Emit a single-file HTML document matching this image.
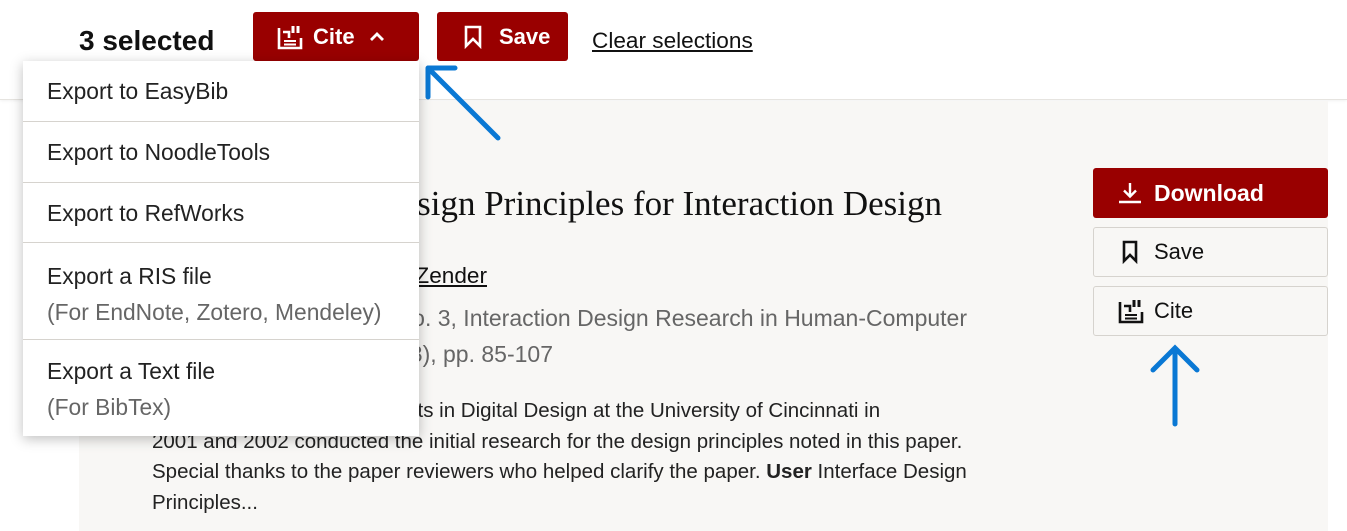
<!DOCTYPE html>
<html><head><meta charset="utf-8"><style>
*{margin:0;padding:0;box-sizing:border-box}
body{width:1347px;height:531px;overflow:hidden;background:#fff;font-family:"Liberation Sans",sans-serif;position:relative}
.hdr{position:absolute;left:0;top:0;width:1347px;height:100px;background:#fff;border-bottom:1px solid #e6e4e0;box-shadow:0 1px 3px rgba(0,0,0,.06)}
.panel{position:absolute;left:79px;top:101px;width:1249px;height:430px;background:#f8f7f5}
.abs{position:absolute;white-space:nowrap}
.btn{position:absolute;background:#990000;color:#fff;font-weight:bold;border-radius:3px;display:flex;align-items:center}
.obtn{position:absolute;left:1093px;width:235px;height:50px;border:1px solid #d6d3ce;border-radius:3px;background:#f8f7f5;display:flex;align-items:center;font-size:22px;color:#111}
.menu{position:absolute;left:23px;top:61px;width:396px;height:375px;background:#fff;box-shadow:0 3px 12px rgba(0,0,0,.25)}
.it{border-bottom:1px solid #d6d3ce;padding-left:24px;font-size:22.8px;color:#222}
.sub{color:#666}
</style></head><body>
<div class="hdr"></div>
<div class="panel"></div>
<div class="abs" style="left:79px;top:25px;font-size:28px;font-weight:bold;color:#111">3 selected</div>
<div class="btn" style="left:253px;top:12px;width:166px;height:49px;font-size:22px">
<svg style="margin-left:24px" width="26" height="26" viewBox="0 0 26 26" fill="none" stroke="#fff" stroke-width="2.6"><path d="M2 4V24H24V14"/><path d="M7 17H19M7 20.5H19" stroke-width="2"/><path d="M16 2v7M21 2v7" stroke-width="3"/><path d="M6 8h6v6"/></svg>
<span style="margin-left:10px">Cite</span>
<svg style="margin-left:14px" width="16" height="12" viewBox="0 0 16 12"><path d="M2 9L8 3L14 9" stroke="#fff" stroke-width="2.8" fill="none"/></svg></div>
<div class="btn" style="left:437px;top:12px;width:131px;height:49px;font-size:22px">
<svg style="margin-left:26px" width="20" height="24" viewBox="0 0 20 24"><path d="M3 2H17V21L10 14L3 21Z" stroke="#fff" stroke-width="2.6" fill="none"/></svg>
<span style="margin-left:16px">Save</span></div>
<div class="abs" style="left:592px;top:28px;font-size:22.6px;color:#111;text-decoration:underline">Clear selections</div>

<div class="abs" style="right:405px;top:184px;font-family:'Liberation Serif',serif;font-size:35px;color:#111">User Interface Design Principles for Interaction Design</div>
<div class="abs" style="right:860px;top:263px;font-size:22.6px;color:#111;text-decoration:underline">Martin Zender</div>
<div class="abs" style="right:380px;top:305px;font-size:23px;color:#666">Design Issues, Vol. 24, No. 3, Interaction Design Research in Human-Computer</div>
<div class="abs" style="right:794px;top:341px;font-size:23px;color:#666">Interaction (Summer 2008), pp. 85-107</div>
<div class="abs" style="left:152px;top:396px;font-size:20.5px;color:#222;line-height:30.5px">User Interface Design students in Digital Design at the University of Cincinnati in<br>2001 and 2002 conducted the initial research for the design principles noted in this paper.<br>Special thanks to the paper reviewers who helped clarify the paper. <b>User</b> Interface Design<br>Principles...</div>

<div class="btn" style="left:1093px;top:168px;width:235px;height:50px;font-size:23px">
<svg style="margin-left:24px" width="26" height="24" viewBox="0 0 26 24"><path d="M13 2V15M7 9.5L13 15.5L19 9.5M2 21H24" stroke="#fff" stroke-width="2.4" fill="none"/></svg>
<span style="margin-left:11px">Download</span></div>
<div class="obtn" style="top:227px"><svg style="margin-left:27px" width="18" height="24" viewBox="0 0 18 24"><path d="M3 2H15V21L9 15L3 21Z" stroke="#111" stroke-width="2.6" fill="none"/></svg><span style="margin-left:15px">Save</span></div>
<div class="obtn" style="top:286px"><svg style="margin-left:24px" width="26" height="26" viewBox="0 0 26 26" fill="none" stroke="#111" stroke-width="2.6"><path d="M2 4V24H24V14"/><path d="M7 17H19M7 20.5H19" stroke-width="2"/><path d="M16 2v7M21 2v7" stroke-width="3"/><path d="M6 8h6v6"/></svg><span style="margin-left:10px">Cite</span></div>

<svg class="abs" style="left:0;top:0" width="1347" height="531"><g stroke="#0a78d4" stroke-width="5" stroke-linecap="round" fill="none"><path d="M498 138L428 68M428 68H455M428 68V97"/><path d="M1175 424V348M1153 370L1175 348L1197 370"/></g></svg>

<div class="menu">
<div class="it" style="height:61px;line-height:61px">Export to EasyBib</div>
<div class="it" style="height:61px;line-height:61px">Export to NoodleTools</div>
<div class="it" style="height:60px;line-height:60px">Export to RefWorks</div>
<div class="it" style="height:97px;padding-top:15px;line-height:36px">Export a RIS file<br><span class="sub">(For EndNote, Zotero, Mendeley)</span></div>
<div class="it" style="height:96px;padding-top:13px;line-height:36px;border:none">Export a Text file<br><span class="sub">(For BibTex)</span></div>
</div>
</body></html>
